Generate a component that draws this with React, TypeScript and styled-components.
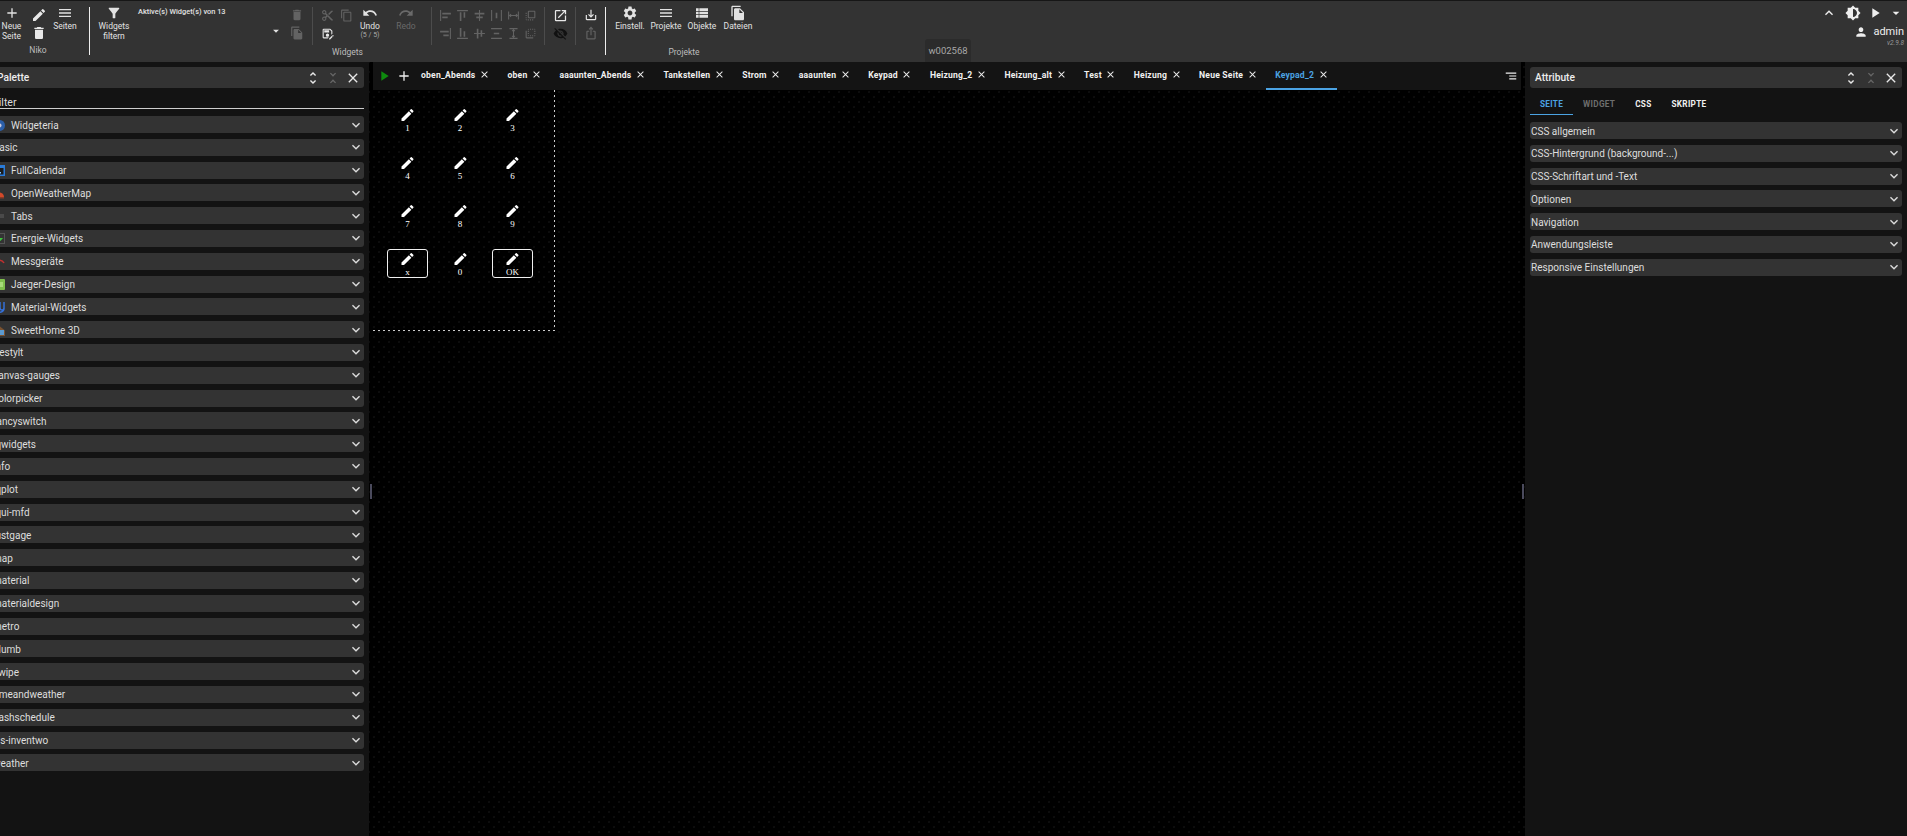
import React from 'react';
import styled, { createGlobalStyle } from 'styled-components';
import {
  MdAdd, MdEdit, MdDelete, MdMenu, MdFilterAlt, MdArrowDropDown, MdContentCut, MdContentCopy,
  MdOutlineSaveAs, MdUndo, MdRedo, MdAlignHorizontalLeft, MdAlignHorizontalRight, MdAlignVerticalTop, MdAlignVerticalBottom,
  MdAlignHorizontalCenter, MdAlignVerticalCenter, MdHorizontalDistribute, MdVerticalDistribute, MdFlipToFront, MdFlipToBack,
  MdOpenInNew, MdVisibilityOff, MdSaveAlt, MdOutlineIosShare, MdSettings, MdViewList, MdFileCopy, MdExpandLess, MdExpandMore,
  MdBrightness6, MdPlayArrow, MdPerson, MdUnfoldMore, MdUnfoldLess, MdClose, MdSegment,
} from 'react-icons/md';

const GlobalStyle = createGlobalStyle`
  html, body {
    margin: 0;
    height: 100%;
    background: #000;
    overflow: hidden;
    font-family: Roboto, "Liberation Sans", sans-serif;
  }
`;

const Page = styled.div`
  width: 1907px;
  height: 836px;
  display: flex;
  flex-direction: column;
  position: relative;
`;

/* toolbar */
const Toolbar = styled.header`
  height: 62px;
  box-sizing: border-box;
  border-top: 1px solid #161616;
  background: #333;
  display: flex;
  color: #e2e2e2;
  font-size: 9px;
`;

const Group = styled.section<{ $w: number; $pad?: string }>`
  width: ${p => p.$w}px;
  padding: ${p => p.$pad || '0'};
  box-sizing: border-box;
  flex-shrink: 0;
  display: flex;
  flex-direction: column;
`;

const GroupBody = styled.div`
  height: 42px;
  padding-top: 4px;
  display: flex;
`;

const GroupLabel = styled.div<{ $up?: number }>`
  text-align: center;
  line-height: 10px;
  font-size: 8.5px;
  color: #bdbdbd;
  margin-top: ${p => -(p.$up || 0)}px;
`;

const WhiteDivider = styled.div`
  width: 1px;
  height: 48px;
  margin-top: 6px;
  background: #eee;
  flex-shrink: 0;
`;

const ThinDivider = styled.div<{ $ml?: number }>`
  width: 1px;
  height: 38px;
  margin: 2px 0 0 ${p => p.$ml || 0}px;
  background: #4c4c4c;
  flex-shrink: 0;
`;

const BigButton = styled.div<{ $w: number; $dim?: boolean; $ml?: number }>`
  width: ${p => p.$w}px;
  margin-left: ${p => p.$ml || 0}px;
  flex-shrink: 0;
  display: flex;
  flex-direction: column;
  align-items: center;
  text-align: center;
  line-height: 10px;
  color: ${p => (p.$dim ? '#6a6a6a' : '#e2e2e2')};
  font-size: 16px;

  span {
    font-size: 8.5px;
  }

  small {
    font-size: 7px;
    line-height: 8px;
    color: #aaa;
  }
`;

const IconColumn = styled.div<{ $w: number; $size?: number; $ml?: number }>`
  width: ${p => p.$w}px;
  margin-left: ${p => p.$ml || 0}px;
  flex-shrink: 0;
  padding-top: 2px;
  display: flex;
  flex-direction: column;
  align-items: center;
  gap: 2px;
  font-size: ${p => p.$size || 16}px;
`;

const IconSlot = styled.div<{ $tone?: 'dim' | 'dark' | 'light' }>`
  height: 16px;
  display: flex;
  align-items: center;
  color: ${p => (p.$tone === 'dim' ? '#636363' : p.$tone === 'dark' ? '#111' : '#e8e8e8')};
`;

const SelectBlock = styled.div`
  width: 149px;
  flex-shrink: 0;
  position: relative;
  display: flex;
  flex-direction: column;
  justify-content: space-between;
  height: 32px;
  font-size: 7.4px;
  font-weight: 500;
  line-height: 11px;
  margin-top: 1px;
`;

const SelectCaret = styled.div`
  align-self: flex-end;
  display: flex;
  font-size: 14px;
  margin-right: 4px;
`;

const UserArea = styled.div`
  margin-left: auto;
  padding: 3px 3px 0 0;
  display: flex;
  flex-direction: column;
  align-items: flex-end;
  color: #eee;
`;

const UserIcons = styled.div`
  display: flex;
  align-items: center;
  font-size: 16px;
  height: 18px;
  gap: 6px;

  svg:first-child {
    margin-right: 2px;
  }

  svg:nth-child(3) {
    margin-right: -1px;
  }
`;

const UserLine = styled.div`
  display: flex;
  align-items: center;
  gap: 5px;
  font-size: 11px;
  height: 15px;
  margin-top: 2px;

  svg {
    font-size: 14px;
  }
`;

const Version = styled.div`
  font-size: 6.5px;
  line-height: 8px;
  color: #999;
  font-style: italic;
`;

const IdTip = styled.div`
  position: absolute;
  left: 925px;
  top: 39px;
  width: 46px;
  height: 23px;
  background: #2b2b2b;
  border-radius: 3px 3px 0 0;
  color: #a8a8a8;
  font-size: 9.5px;
  line-height: 24px;
  text-align: center;
`;

/* main */
const Main = styled.main`
  flex: 1;
  display: flex;
  min-height: 0;
`;

const Panel = styled.aside<{ $w: number }>`
  width: ${p => p.$w}px;
  flex-shrink: 0;
  box-sizing: border-box;
  padding: 5px 5px 0;
  background: #131313;
  overflow: hidden;
`;

const PanelContent = styled.div<{ $shift?: number }>`
  width: 372px;
  margin-left: ${p => -(p.$shift || 0)}px;
`;

const PanelHeader = styled.div`
  height: 21px;
  border-radius: 3px;
  background: #333;
  display: flex;
  align-items: center;
  padding: 0 3px 0 5px;
  color: #eee;
  font-size: 10.2px;
  font-weight: 500;
`;

const HeaderIcons = styled.div`
  margin-left: auto;
  display: flex;
  align-items: center;
  gap: 4px;
  font-size: 16px;
`;

const HeaderIcon = styled.div<{ $dim?: boolean }>`
  display: flex;
  color: ${p => (p.$dim ? '#666' : '#e8e8e8')};
`;

const FilterBox = styled.div`
  height: 21px;
  box-sizing: border-box;
  border-bottom: 1px solid #cfcfcf;
  padding: 8px 0 0 1px;
  line-height: 13px;
  font-size: 10.5px;
  color: #ddd;
  margin-bottom: 7px;
`;

const AccordionRow = styled.div`
  height: 17px;
  box-sizing: border-box;
  margin-bottom: 5.8px;
  border-radius: 3px;
  background: #333;
  display: flex;
  align-items: center;
  padding: 1px 0 0 1px;
  color: #dedede;
  font-size: 10px;
`;

const RowIcon = styled.svg`
  width: 13px;
  height: 13px;
  margin-right: 5px;
  flex-shrink: 0;
`;

const RowChevron = styled.div`
  margin-left: auto;
  margin-top: -1px;
  display: flex;
  font-size: 16px;
  color: #ddd;
`;

const PanelTabs = styled.div`
  display: flex;
  height: 27px;
  margin-bottom: 7px;
`;

const PanelTab = styled.div<{ $state?: 'active' | 'off' }>`
  padding: 3px 10px 0;
  height: 27px;
  box-sizing: border-box;
  line-height: 26px;
  font-size: 8.2px;
  font-weight: 700;
  letter-spacing: 0.3px;
  color: ${p => (p.$state === 'active' ? '#4ba3e3' : p.$state === 'off' ? '#6e6e6e' : '#f0f0f0')};
  border-bottom: 1px solid ${p => (p.$state === 'active' ? '#4ba3e3' : 'transparent')};
`;

/* canvas */
const Workspace = styled.div`
  flex: 1;
  position: relative;
  min-width: 0;
  background-color: #000;
  background-image: radial-gradient(#1b1b1b 0.6px, transparent 0.8px), radial-gradient(#1b1b1b 0.6px, transparent 0.8px);
  background-size: 10px 10px;
  background-position: 0 0, 5px 5px;
`;

const TabBar = styled.nav`
  height: 28px;
  margin: 0 4px;
  background: #141414;
  display: flex;
  align-items: center;
`;

const TabTool = styled.div<{ $w: number; $color?: string }>`
  width: ${p => p.$w}px;
  flex-shrink: 0;
  display: flex;
  justify-content: center;
  font-size: 16px;
  color: ${p => p.$color || '#eee'};
`;

const PageTab = styled.div<{ $active?: boolean }>`
  height: 28px;
  box-sizing: border-box;
  padding: 0 8.5px 0 9px;
  display: flex;
  align-items: center;
  gap: 3.5px;
  font-size: 8.6px;
  font-weight: 700;
  letter-spacing: 0.2px;
  white-space: nowrap;
  color: ${p => (p.$active ? '#4ba3e3' : '#f0f0f0')};
  border-bottom: 2px solid ${p => (p.$active ? '#4ba3e3' : 'transparent')};

  svg {
    font-size: 11px;
    color: #eee;
    margin-top: -2px;
  }
`;

const TabMenu = styled.div`
  margin-left: auto;
  margin-right: 3px;
  display: flex;
  font-size: 14px;
  color: #eee;
`;

const VisPage = styled.div`
  width: 182px;
  height: 241px;
  margin-left: 4px;
  box-sizing: border-box;
  padding: 15px 0 0 14px;
  background:
    repeating-linear-gradient(to bottom, #ccc 0 2px, transparent 2px 5px) right top / 1px 100% no-repeat,
    repeating-linear-gradient(to right, #ccc 0 2px, transparent 2px 5px) left bottom / 100% 1px no-repeat;
`;

const KeyGrid = styled.div`
  display: grid;
  grid-template-columns: repeat(3, 41px);
  grid-auto-rows: 29px;
  column-gap: 11.5px;
  row-gap: 19px;
`;

const Key = styled.div<{ $outlined?: boolean }>`
  box-sizing: border-box;
  border: 1px solid ${p => (p.$outlined ? '#f0f0f0' : 'transparent')};
  border-radius: 3px;
  display: flex;
  flex-direction: column;
  align-items: center;
  color: #fff;
  font-family: "Liberation Serif", serif;
  font-size: 9px;
  line-height: 10px;

  svg {
    font-size: 17px;
    margin-top: 1px;
  }
`;

const SplitHandle = styled.div<{ $side: 'left' | 'right' }>`
  position: absolute;
  top: 422px;
  ${p => p.$side}: 1px;
  width: 2px;
  height: 15px;
  background: #4a4a5c;
`;

const WidthGlyph: React.FC<{ vertical?: boolean }> = ({ vertical }) => (
  <svg viewBox="0 0 16 16" width="13" height="13" fill="none" stroke="currentColor" strokeWidth="1.3" transform={vertical ? 'rotate(90)' : undefined}>
    <path d="M2 3v10M14 3v10M3 8h10M5 6.3 3.3 8 5 9.7M11 6.3 12.7 8 11 9.7" />
  </svg>
);

type BadgeKind = 'ball' | 'calendar' | 'weather' | 'tabs' | 'energy' | 'gauge' | 'jaeger' | 'material' | 'home';

const RowBadge: React.FC<{ kind: BadgeKind }> = ({ kind }) => (
  <RowIcon viewBox="0 0 13 13">
    {kind === 'ball' && <><circle cx="6.5" cy="6.5" r="5.5" fill="#2c5fa8" /><circle cx="6.5" cy="6.5" r="2" fill="#c9c9e0" /></>}
    {kind === 'calendar' && <><rect x="1" y="1" width="11" height="11" fill="#2a7bd8" /><rect x="2.5" y="4" width="8" height="6.5" fill="#1b1b1b" /><rect x="6" y="8" width="2" height="1.5" fill="#7fc3ff" /></>}
    {kind === 'weather' && <><path d="M2 10a4.5 4.5 0 0 1 9 0Z" fill="#d2492a" /><rect x="2" y="10" width="9" height="1.5" fill="#8a3a24" /></>}
    {kind === 'tabs' && <rect x="3" y="4" width="8" height="4" fill="#4a4a4a" />}
    {kind === 'energy' && <><rect x="1.5" y="1.5" width="10" height="10" fill="none" stroke="#555" /><path d="M5 6h5l-2.500 3Z" fill="#3ec43e" /></>}
    {kind === 'gauge' && <path d="M2 8a5 5 0 0 1 9 0" fill="none" stroke="#c23030" strokeWidth="1.500" />}
    {kind === 'jaeger' && <><rect x="1" y="1" width="11" height="11" rx="1" fill="#7fbf4d" /><rect x="7" y="4" width="3" height="5" fill="#a8dc7a" /></>}
    {kind === 'material' && <path d="M7 1v6a2 2 0 0 0 4 0V2M11 1v7a4 4 0 0 1-5 3" fill="none" stroke="#3570d8" strokeWidth="1.500" />}
    {kind === 'home' && <><path d="M1 6.500 6.500 2 12 6.500V12H1Z" fill="#7a5230" /><rect x="5" y="6" width="6" height="5" fill="#5c9ad0" /></>}
  </RowIcon>
);

const paletteRows: { name: string; badge?: BadgeKind }[] = [
  { name: 'Widgeteria', badge: 'ball' },
  { name: 'Basic' },
  { name: 'FullCalendar', badge: 'calendar' },
  { name: 'OpenWeatherMap', badge: 'weather' },
  { name: 'Tabs', badge: 'tabs' },
  { name: 'Energie-Widgets', badge: 'energy' },
  { name: 'Messgeräte', badge: 'gauge' },
  { name: 'Jaeger-Design', badge: 'jaeger' },
  { name: 'Material-Widgets', badge: 'material' },
  { name: 'SweetHome 3D', badge: 'home' },
  { name: 'Restylt' },
  { name: 'canvas-gauges' },
  { name: 'colorpicker' },
  { name: 'fancyswitch' },
  { name: 'jqwidgets' },
  { name: 'info' },
  { name: 'jqplot' },
  { name: 'jqui-mfd' },
  { name: 'justgage' },
  { name: 'map' },
  { name: 'material' },
  { name: 'materialdesign' },
  { name: 'metro' },
  { name: 'plumb' },
  { name: 'swipe' },
  { name: 'timeandweather' },
  { name: 'hashschedule' },
  { name: 'vis-inventwo' },
  { name: 'weather' },
];

const attributeRows = [
  'CSS allgemein',
  'CSS-Hintergrund (background-...)',
  'CSS-Schriftart und -Text',
  'Optionen',
  'Navigation',
  'Anwendungsleiste',
  'Responsive Einstellungen',
];

const pageTabs = ['oben_Abends', 'oben', 'aaaunten_Abends', 'Tankstellen', 'Strom', 'aaaunten', 'Keypad', 'Heizung_2', 'Heizung_alt', 'Test', 'Heizung', 'Neue Seite', 'Keypad_2'];

const keys = ['1', '2', '3', '4', '5', '6', '7', '8', '9', 'x', '0', 'OK'];

const alignPairs = [
  [<MdAlignHorizontalLeft />, <MdAlignHorizontalRight />],
  [<MdAlignVerticalTop />, <MdAlignVerticalBottom />],
  [<MdAlignHorizontalCenter />, <MdAlignVerticalCenter />],
  [<MdHorizontalDistribute />, <MdVerticalDistribute />],
  [<WidthGlyph />, <WidthGlyph vertical />],
  [<MdFlipToFront />, <MdFlipToBack />],
];

const PanelControls: React.FC = () => (
  <HeaderIcons>
    <HeaderIcon><MdUnfoldMore /></HeaderIcon>
    <HeaderIcon $dim><MdUnfoldLess /></HeaderIcon>
    <HeaderIcon><MdClose /></HeaderIcon>
  </HeaderIcons>
);

const App: React.FC = () => (
  <Page>
    <GlobalStyle />
    <Toolbar>
      <Group $w={89} $pad="0 13px 0 0">
        <GroupBody>
          <BigButton $w={23}><MdAdd /><span>Neue Seite</span></BigButton>
          <IconColumn $w={31}>
            <IconSlot><MdEdit /></IconSlot>
            <IconSlot><MdDelete /></IconSlot>
          </IconColumn>
          <BigButton $w={22}><MdMenu /><span>Seiten</span></BigButton>
        </GroupBody>
        <GroupLabel $up={2}>Niko</GroupLabel>
      </Group>
      <WhiteDivider />
      <Group $w={515}>
        <GroupBody>
          <BigButton $w={48}><MdFilterAlt /><span>Widgets<br />filtern</span></BigButton>
          <SelectBlock>
            Aktive(s) Widget(s) von 13
            <SelectCaret><MdArrowDropDown /></SelectCaret>
          </SelectBlock>
          <IconColumn $w={20} $size={14}>
            <IconSlot $tone="dim"><MdDelete /></IconSlot>
            <IconSlot $tone="dim"><MdFileCopy /></IconSlot>
          </IconColumn>
          <ThinDivider $ml={5} />
          <IconColumn $w={29} $size={13}>
            <IconSlot $tone="dim"><MdContentCut /></IconSlot>
            <IconSlot><MdOutlineSaveAs /></IconSlot>
          </IconColumn>
          <IconColumn $w={9} $size={13}>
            <IconSlot $tone="dim"><MdContentCopy /></IconSlot>
          </IconColumn>
          <BigButton $w={36} $ml={1}><MdUndo /><span>Undo</span><small>(5 / 5)</small></BigButton>
          <BigButton $w={36} $dim><MdRedo /><span>Redo</span></BigButton>
          <ThinDivider $ml={7} />
          {alignPairs.map((pair, i) => (
            <IconColumn $w={17} $size={13} $ml={i === 0 ? 5 : 0} key={i}>
              <IconSlot $tone="dim">{pair[0]}</IconSlot>
              <IconSlot $tone="dim">{pair[1]}</IconSlot>
            </IconColumn>
          ))}
          <ThinDivider $ml={5} />
          <IconColumn $w={30} $size={15}>
            <IconSlot><MdOpenInNew /></IconSlot>
            <IconSlot $tone="dark"><MdVisibilityOff /></IconSlot>
          </IconColumn>
          <ThinDivider />
          <IconColumn $w={29} $size={14}>
            <IconSlot><MdSaveAlt /></IconSlot>
            <IconSlot $tone="dim"><MdOutlineIosShare /></IconSlot>
          </IconColumn>
        </GroupBody>
        <GroupLabel>Widgets</GroupLabel>
      </Group>
      <WhiteDivider />
      <Group $w={156} $pad="0 6px">
        <GroupBody>
          <BigButton $w={36}><MdSettings /><span>Einstell.</span></BigButton>
          <BigButton $w={36}><MdMenu /><span>Projekte</span></BigButton>
          <BigButton $w={36}><MdViewList /><span>Objekte</span></BigButton>
          <BigButton $w={36}><MdFileCopy /><span>Dateien</span></BigButton>
        </GroupBody>
        <GroupLabel>Projekte</GroupLabel>
      </Group>
      <UserArea>
        <UserIcons>
          <MdExpandLess />
          <MdBrightness6 />
          <MdPlayArrow />
          <MdArrowDropDown />
        </UserIcons>
        <UserLine><MdPerson />admin</UserLine>
        <Version>v2.9.8</Version>
      </UserArea>
    </Toolbar>
    <IdTip>w002568</IdTip>
    <Main>
      <Panel $w={369}>
        <PanelContent $shift={13}>
          <PanelHeader>Palette<PanelControls /></PanelHeader>
          <FilterBox>Filter</FilterBox>
          {paletteRows.map(row => (
            <AccordionRow key={row.name}>
              {row.badge && <RowBadge kind={row.badge} />}
              {row.name}
              <RowChevron><MdExpandMore /></RowChevron>
            </AccordionRow>
          ))}
        </PanelContent>
      </Panel>
      <Workspace>
        <TabBar>
          <TabTool $w={22} $color="#0e8a0e"><MdPlayArrow /></TabTool>
          <TabTool $w={17}><MdAdd /></TabTool>
          {pageTabs.map(name => (
            <PageTab key={name} $active={name === 'Keypad_2'}>{name}<MdClose /></PageTab>
          ))}
          <TabMenu><MdSegment /></TabMenu>
        </TabBar>
        <VisPage>
          <KeyGrid>
            {keys.map(k => (
              <Key key={k} $outlined={k === 'x' || k === 'OK'}><MdEdit />{k}</Key>
            ))}
          </KeyGrid>
        </VisPage>
        <SplitHandle $side="left" />
        <SplitHandle $side="right" />
      </Workspace>
      <Panel $w={382}>
        <PanelContent>
          <PanelHeader>Attribute<PanelControls /></PanelHeader>
          <PanelTabs>
            <PanelTab $state="active">SEITE</PanelTab>
            <PanelTab $state="off">WIDGET</PanelTab>
            <PanelTab>CSS</PanelTab>
            <PanelTab>SKRIPTE</PanelTab>
          </PanelTabs>
          {attributeRows.map(name => (
            <AccordionRow key={name}>
              {name}
              <RowChevron><MdExpandMore /></RowChevron>
            </AccordionRow>
          ))}
        </PanelContent>
      </Panel>
    </Main>
  </Page>
);

export default App;
